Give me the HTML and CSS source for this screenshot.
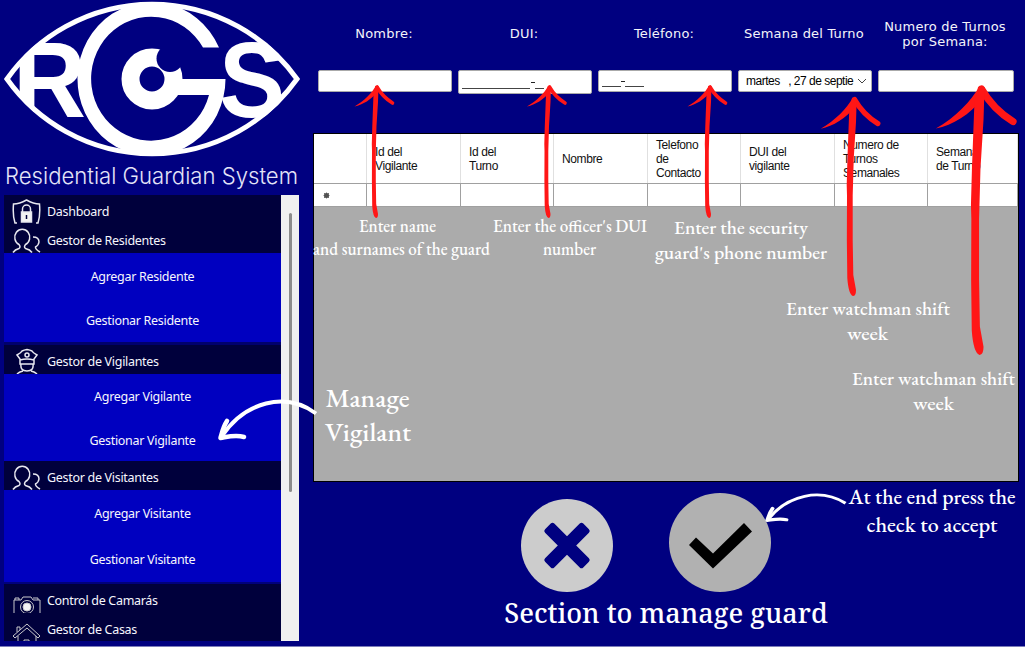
FILE: index.html
```html
<!DOCTYPE html>
<html lang="es">
<head>
<meta charset="utf-8">
<title>Residential Guardian System</title>
<link rel="stylesheet" href="styles.css">
</head>
<body>
<div class="app">
  <aside class="sidebar">
    <svg class="logo" viewBox="0 0 305 195" width="305" height="195">
      <clipPath id="eye"><path d="M5 79A178 178 0 0 1 299 79A178 178 0 0 1 5 79Z"/></clipPath>
      <path d="M7 79A178 178 0 0 1 297 79A178 178 0 0 1 7 79Z" fill="none" stroke="#fff" stroke-width="5"/>
      <g class="logo-letters" clip-path="url(#eye)">
        <text x="13" y="116.500" textLength="73" lengthAdjust="spacingAndGlyphs">R</text>
        <text x="219" y="117" textLength="66" lengthAdjust="spacingAndGlyphs">S</text>
      </g>
      <ellipse cx="152" cy="79" rx="72" ry="75" fill="#000080"/>
      <path fill="#fff" d="M219 47.500A74 77 0 1 0 225.500 79H176V95H209A60 62 0 1 1 203 47.500Z"/>
      <circle cx="152" cy="79" r="21.500" fill="none" stroke="#fff" stroke-width="18"/>
      <circle cx="170" cy="58.500" r="13.500" fill="#000080"/>
      <text class="logo-name" x="5" y="184" textLength="293" lengthAdjust="spacingAndGlyphs">Residential Guardian System</text>
    </svg>
    <div class="menu">
      <nav class="items">
        <div class="item"><svg class="icon" viewBox="0 0 30 29"><path d="M5 28H3C1 22 1 15 1.500 9C7 9 11 7 14.500 5C18 7 22 9 27.500 9C28 15 28 22 26 28H24"/><path d="M10.500 17V14a4 4 0 0 1 8 0v3"/><path class="solid" d="M9.500 17h10v10h-10z"/><path d="M14.500 20v4" stroke="#00003c"/></svg><span>Dashboard</span></div>
        <div class="item"><svg class="icon" viewBox="0 0 30 29"><path d="M1 28.500Q3 25.500 7 24.500Q9 23 7 20.500A7.500 8 0 1 1 13.500 20.500Q11.500 23 13.500 24.500Q18 25.500 20 28.500M21 13Q27 13 27 18Q26.500 21.500 23.500 23Q23 25 28 28"/></svg><span>Gestor de Residentes</span></div>
        <div class="sub residents"><span>Agregar Residente</span><span>Gestionar Residente</span></div>
        <div class="item"><svg class="icon" viewBox="0 0 30 29"><path d="M8 14L5 10Q9 8 10 6Q12 5 15 4.500Q18 5 20 6Q21 8 25 10L22 14V19H8ZM8 15Q15 13 22 15M9 19Q8 26 15 26Q22 26 21 19M5 29Q7 27 11 26M25 29Q23 27 19 26"/><circle cx="15" cy="10" r="2"/></svg><span>Gestor de Vigilantes</span></div>
        <div class="sub guards"><span>Agregar Vigilante</span><span>Gestionar Vigilante</span></div>
        <div class="item"><svg class="icon" viewBox="0 0 30 29"><path d="M1 28.500Q3 25.500 7 24.500Q9 23 7 20.500A7.500 8 0 1 1 13.500 20.500Q11.500 23 13.500 24.500Q18 25.500 20 28.500M21 13Q27 13 27 18Q26.500 21.500 23.500 23Q23 25 28 28"/></svg><span>Gestor de Visitantes</span></div>
        <div class="sub visitors"><span>Agregar Visitante</span><span>Gestionar Visitante</span></div>
        <div class="item"><svg class="icon thin" viewBox="0 0 30 29"><path d="M2 29V16H9L11 13H19L21 16H28V29M3 16v-2h4v2M21 14h5v2"/><circle cx="15" cy="23" r="6.500"/><circle class="solid" cx="15" cy="23" r="4"/></svg><span>Control de Camarás</span></div>
        <div class="item last"><svg class="icon thin" viewBox="0 0 30 28"><path d="M1 23L15 11L28 23L26 25L15 15L3 25ZM5 19V14H8V17M6 23V29M24 23V29M12 29V27H17V29"/></svg><span>Gestor de Casas</span></div>
      </nav>
      <div class="scrollbar"><div class="thumb"></div></div>
    </div>
  </aside>

  <main class="content">
    <form class="fields">
      <div class="field"><div class="label">Nombre:</div><div class="input"></div></div>
      <div class="field"><div class="label">DUI:</div><div class="input tall"><svg width="130" height="22" viewBox="0 0 130 22"><path d="M3 17.500h68M76 17.500h9" stroke="#444"/><path d="M72 11.500h4" stroke="#222"/></svg></div></div>
      <div class="field"><div class="label">Teléfono:</div><div class="input"><svg width="130" height="20" viewBox="0 0 130 20"><path d="M3 15.500h19M26 15.500h19" stroke="#444"/><path d="M22 10.500h4" stroke="#222"/></svg></div></div>
      <div class="field"><div class="label">Semana del Turno</div><div class="input date"><span>martes&nbsp;&nbsp; , 27 de septie</span><svg width="10" height="8" viewBox="0 0 10 8"><path d="M1 2L5 6L9 2" fill="none" stroke="#444"/></svg></div></div>
      <div class="field wide"><div class="label">Numero de Turnos por Semana:</div><div class="input"></div></div>
    </form>

    <div class="grid">
      <div class="row head">
        <div class="cell"></div><div class="cell">Id del<br>Vigilante</div><div class="cell">Id del<br>Turno</div><div class="cell">Nombre</div><div class="cell">Telefono<br>de<br>Contacto</div><div class="cell">DUI del<br>vigilante</div><div class="cell">Numero de<br>Turnos<br>Semanales</div><div class="cell">Semana<br>de Turno</div>
      </div>
      <div class="row blank">
        <div class="cell"><svg width="7" height="7" viewBox="0 0 7 7"><circle cx="3.500" cy="3.500" r="2.500" fill="#444"/><path d="M3.500 .5v6M.5 3.500h6M1 1l5 5M6 1L1 6" stroke="#555" stroke-width=".8"/></svg></div><div class="cell"></div><div class="cell"></div><div class="cell"></div><div class="cell"></div><div class="cell"></div><div class="cell"></div><div class="cell"></div>
      </div>
    </div>

    <div class="actions">
      <svg width="92" height="93" viewBox="0 0 92 93"><ellipse cx="46" cy="46.500" rx="46" ry="46.500" fill="#ccc"/><g transform="rotate(45 46 46.500)" fill="#000080"><rect x="19" y="40" width="54" height="13" rx="2.500"/><rect x="39.500" y="19.500" width="13" height="54" rx="2.500"/></g></svg>
      <svg width="102" height="99" viewBox="0 0 102 99"><ellipse cx="51" cy="49.500" rx="51" ry="49.500" fill="#b1b1b1"/><path d="M20 52L27 44.500L44 60.500L75 30L83 38.500L44 75.500Z" fill="#000"/></svg>
    </div>
    <h1 class="title">Section to manage guard</h1>
  </main>

  <svg class="notes" width="1025" height="647" viewBox="0 0 1025 647">
    <defs>
      <g id="arrow">
        <path d="M-1 -.5C-5 7 -13 15 -22.500 20.500C-14 18.500 -6 14 1 5Z"/>
        <path d="M0 1C4 8 9 13 15.500 17" class="line"/>
        <path d="M-1.500 0L1.500 0L1 16L-.5 40L-1 58L-1.200 65L-1.200 95L-.8 118L1 128Q1 132 -1 132Q-4 131 -4.800 120L-5.100 95L-5 65L-5.200 58L-4.700 40L-3.500 8Z"/>
      </g>
      <g id="pointer">
        <path class="curve" d="M97 12.500C66 -10 26 1 3 35"/>
        <path class="tip" d="M8 20C4 26 3 32 1.500 37C8 36 16 33.500 25 36"/>
      </g>
    </defs>
    <g class="red">
      <use href="#arrow" x="377" y="86"/>
      <use href="#arrow" x="549.500" y="86"/>
      <use href="#arrow" x="710" y="86"/>
      <use href="#arrow" transform="translate(854.500 98) scale(1.500)"/>
      <use href="#arrow" transform="translate(981.500 87) scale(2.030)"/>
    </g>
    <g class="white">
      <use href="#pointer" x="219" y="401"/>
      <use href="#pointer" transform="translate(766 494.500) scale(.82 .7)"/>
    </g>
    <g class="note-text">
      <g font-size="17.500">
        <text x="359" y="232" textLength="77" lengthAdjust="spacingAndGlyphs">Enter name</text>
        <text x="313" y="254.500" textLength="177" lengthAdjust="spacingAndGlyphs">and surnames of the guard</text>
        <text x="493" y="232" textLength="154" lengthAdjust="spacingAndGlyphs">Enter the officer's DUI</text>
        <text x="543" y="254.500" textLength="53" lengthAdjust="spacingAndGlyphs">number</text>
      </g>
      <g font-size="19.500">
        <text x="674" y="234" textLength="134" lengthAdjust="spacingAndGlyphs">Enter the security</text>
        <text x="655" y="259" textLength="172" lengthAdjust="spacingAndGlyphs">guard's phone number</text>
        <text x="786" y="315" textLength="164" lengthAdjust="spacingAndGlyphs">Enter watchman shift</text>
        <text x="847" y="340" textLength="41" lengthAdjust="spacingAndGlyphs">week</text>
        <text x="852" y="385" textLength="163" lengthAdjust="spacingAndGlyphs">Enter watchman shift</text>
        <text x="913" y="410" textLength="41" lengthAdjust="spacingAndGlyphs">week</text>
      </g>
      <g font-size="27">
        <text x="325.500" y="406.500" textLength="84" lengthAdjust="spacingAndGlyphs">Manage</text>
        <text x="325" y="441" textLength="86" lengthAdjust="spacingAndGlyphs">Vigilant</text>
      </g>
      <g font-size="21.500">
        <text x="848.500" y="504" textLength="167" lengthAdjust="spacingAndGlyphs">At the end press the</text>
        <text x="866.500" y="532" textLength="131" lengthAdjust="spacingAndGlyphs">check to accept</text>
      </g>
    </g>
  </svg>
</div>
</body>
</html>
```
FILE: styles.css
```css
* { box-sizing: border-box; }
body { margin: 0; background: #000080; }
.app {
  position: relative;
  display: flex;
  width: 1025px;
  height: 647px;
  overflow: hidden;
  background: #000080;
  border-bottom: 1px solid #7c7cba;
}
.sidebar { width: 313px; flex: none; }
.logo { display: block; overflow: visible; }
.logo-letters { font: bold 107px "Liberation Sans", Arial, sans-serif; fill: #fff; }
.logo-name { font: 300 23px Inter, "Liberation Sans", Arial, sans-serif; fill: #e4e4f8; }
.menu { display: flex; width: 295px; height: 446px; margin-left: 4px; }
.items {
  width: 277px;
  color: #f6f6fc;
  font: 12.5px "Noto Sans", "Open Sans", sans-serif;
  letter-spacing: -0.3px;
}
.item {
  display: flex;
  height: 29px;
  padding-left: 8px;
  gap: 5px;
  background: #00003c;
  line-height: 33px;
}
.item.last { height: 28px; }
.icon {
  width: 30px;
  height: 29px;
  flex: none;
  fill: none;
  stroke: #e8e8f0;
  stroke-width: 1.5;
}
.item.last .icon { height: 28px; }
.icon.thin { stroke-width: 1; stroke: #c8c8cc; }
.icon .solid { fill: #f4f4f4; }
.sub {
  display: flex;
  flex-direction: column;
  align-items: center;
  justify-content: space-between;
  background: #0000c0;
  line-height: 18px;
}
.residents { height: 92px; padding: 15px 0 12px; border-bottom: 3px solid #00006c; }
.guards { height: 87px; padding: 14px 0 11px; }
.visitors { height: 94px; padding: 15px 0 13px; border-bottom: 2px solid #00007c; }
.scrollbar { width: 18px; background: #f0f0f0; padding: 18px 0 0 8px; }
.thumb { width: 3px; height: 279px; border-radius: 2px; background: #8c8c8c; }

.content { width: 706px; }
.fields { display: flex; gap: 6px; height: 133px; padding-left: 5px; }
.field { width: 134px; }
.field.wide { width: 136px; }
.label {
  display: flex;
  align-items: center;
  justify-content: center;
  height: 70px;
  margin: 0 1px 0 -1px;
  padding-bottom: 3px;
  color: #f4f4fa;
  font: 13px/15px "DejaVu Sans", sans-serif;
  letter-spacing: 0.2px;
  text-align: center;
}
.input {
  height: 22px;
  background: #fff;
  border: 1px solid #aaa;
  border-radius: 2px;
}
.input.tall { height: 24px; }
.date {
  display: flex;
  align-items: center;
  justify-content: space-between;
  padding: 0 4px 0 7px;
  color: #000;
  font: 12px "Liberation Sans", Arial, sans-serif;
  letter-spacing: -0.5px;
  white-space: pre;
}
.date svg { flex: none; }

.grid {
  height: 349px;
  border: 1px solid #000;
  background: #ababab;
}
.row { display: grid; grid-template-columns: 53px 94px 93px 94px 93px 94px 93px 90px; background: #fff; }
.cell { display: flex; align-items: center; border-right: 1px solid #a0a0a0; }
.head { height: 50px; border-bottom: 1px solid #a0a0a0; }
.head .cell {
  padding-left: 8px;
  border-right-color: #e0e0e0;
  color: #111;
  font: 12px/14px "Liberation Sans", Arial, sans-serif;
  letter-spacing: -0.4px;
}
.blank { height: 23px; border-bottom: 1px solid #a0a0a0; }
.blank .cell:first-child { padding-left: 9px; }

.actions {
  display: flex;
  align-items: center;
  gap: 56px;
  height: 112px;
  padding: 15px 0 0 208px;
}
.actions svg { flex: none; }
.actions svg:last-child { margin-top: -7px; }
.title {
  margin: 0;
  color: #fff;
  font: 500 27px/38px "Noto Serif", "DejaVu Serif Condensed", "DejaVu Serif", serif;
  text-align: center;
  white-space: nowrap;
}

.notes { position: absolute; left: 0; top: 0; pointer-events: none; }
.red { fill: #ff1616; }
.line { fill: none; stroke: #ff1616; stroke-width: 3.6; stroke-linecap: round; }
.curve { fill: none; stroke: #fff; stroke-width: 4; }
.tip { fill: none; stroke: #fff; stroke-width: 4.6; stroke-linecap: round; stroke-linejoin: round; }
.note-text { fill: #fff; font-family: "EB Garamond", "Liberation Serif", serif; font-weight: 500; }
```
